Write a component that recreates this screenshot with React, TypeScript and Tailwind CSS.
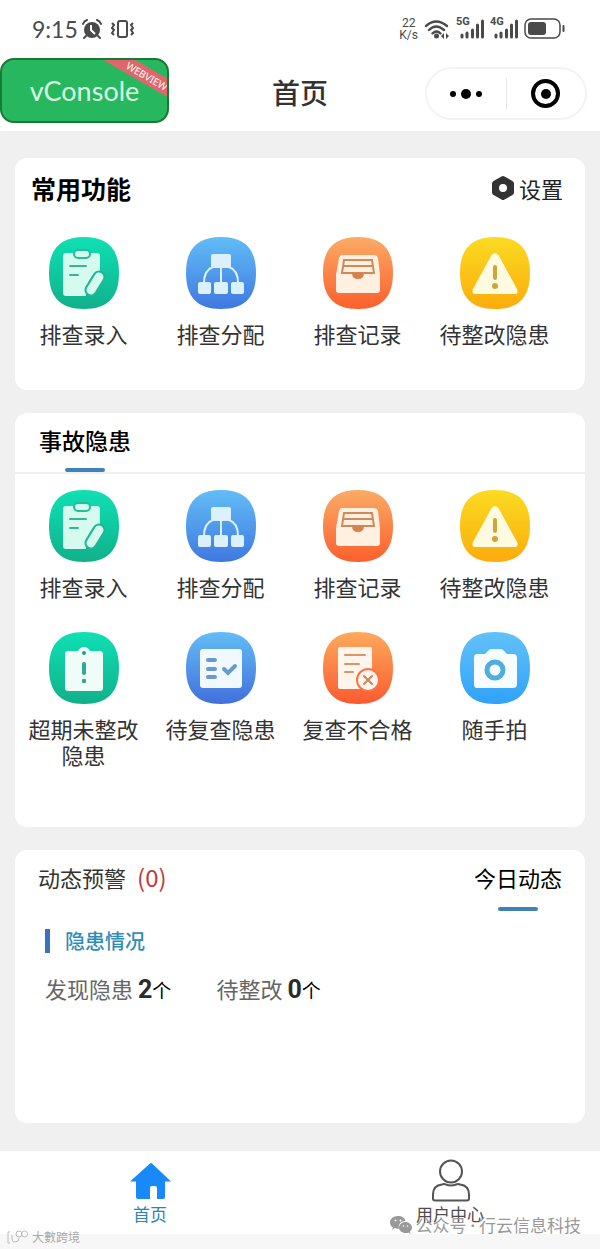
import React, { useState } from "react";

type IconName =
  | "entry"
  | "assign"
  | "record"
  | "warning"
  | "overdue"
  | "review"
  | "reject"
  | "camera";

interface MenuItem {
  icon: IconName;
  label: string;
}

const COMMON_MENUS: MenuItem[] = [
  { icon: "entry", label: "排查录入" },
  { icon: "assign", label: "排查分配" },
  { icon: "record", label: "排查记录" },
  { icon: "warning", label: "待整改隐患" },
];

const HAZARD_MENUS: MenuItem[] = [
  ...COMMON_MENUS,
  { icon: "overdue", label: "超期未整改隐患" },
  { icon: "review", label: "待复查隐患" },
  { icon: "reject", label: "复查不合格" },
  { icon: "camera", label: "随手拍" },
];

const ICON_COLORS: Record<IconName, [string, string]> = {
  entry: ["#0fe0b4", "#10b08a"],
  assign: ["#62bdf6", "#3f78e0"],
  record: ["#fbab66", "#fb5f2c"],
  warning: ["#fbdb22", "#fbac0c"],
  overdue: ["#0fe0b4", "#10b08a"],
  review: ["#62bdf6", "#426fdc"],
  reject: ["#fdaa5c", "#fb5a30"],
  camera: ["#62c2f8", "#30a2f8"],
};

const GLYPHS: Record<IconName, React.ReactNode> = {
  entry: (
    <>
      <path
        d="M18 16h31q3 0 3 3v15L38 56v3H18q-3 0-3-3V19q0-3 3-3Z"
        fill="#d5fbee"
      />
      <rect
        x="26"
        y="13"
        width="16"
        height="8"
        rx="4"
        fill="#d5fbee"
        stroke="#1fc09a"
        strokeWidth="2"
      />
      <path
        d="M22 29h16M22 38h8"
        stroke="#35b795"
        strokeWidth="2"
        strokeLinecap="round"
      />
      <path
        d="M51 40 43 53"
        stroke="#1cb893"
        strokeWidth="13"
        strokeLinecap="round"
      />
      <path
        d="M51 40 43 53"
        stroke="#d5fbee"
        strokeWidth="9"
        strokeLinecap="round"
      />
    </>
  ),
  assign: (
    <>
      <path
        d="M28 30q-9 3-9 16M36 30v17M44 30q9 3 9 16"
        fill="none"
        stroke="#dcf1ff"
        strokeWidth="2"
      />
      <rect x="26" y="17" width="20" height="14" rx="2" fill="#dcf1ff" />
      <rect x="13" y="45" width="13" height="12" rx="2" fill="#dcf1ff" />
      <rect x="29" y="45" width="14" height="12" rx="2" fill="#dcf1ff" />
      <rect x="46" y="45" width="13" height="12" rx="2" fill="#dcf1ff" />
    </>
  ),
  record: (
    <>
      <path
        d="M20 18h32q3 0 4 3l2 17v15q0 3-3 3H17q-3 0-3-3V38l3-17q1-3 3-3Z"
        fill="#fff0e2"
      />
      <path
        d="M22 23h28l2 13H20Z"
        fill="#fff0e2"
        stroke="#d08a58"
        strokeWidth="2"
      />
      <path d="M22 29h28" stroke="#d08a58" strokeWidth="2" />
      <path d="M30 36h12q0 6-6 6t-6-6Z" fill="#d9814e" />
    </>
  ),
  warning: (
    <>
      <path
        d="M32 19q4-6 8 0l18 33q2 5-3 5H17q-5 0-3-5Z"
        fill="#fffbe0"
      />
      <path
        d="M36 30v11"
        stroke="#cfa53a"
        strokeWidth="4"
        strokeLinecap="round"
      />
      <circle cx="36" cy="49" r="3" fill="#cfa53a" />
    </>
  ),
  overdue: (
    <>
      <path
        d="M20 19h10q2-4 6-4t6 4h10q3 0 3 3v34q0 3-3 3H20q-3 0-3-3V22q0-3 3-3Z"
        fill="#effcf8"
      />
      <circle cx="36" cy="21" r="2" fill="#2b9c84" />
      <path d="M36 32v9" stroke="#2cab8e" strokeWidth="4" strokeLinecap="round" />
      <rect x="34" y="47" width="4" height="4" rx="1" fill="#2cab8e" />
    </>
  ),
  review: (
    <>
      <rect x="15" y="17" width="42" height="39" rx="3" fill="#f1f8fe" />
      <path
        d="M23 28h7M23 37h7M23 45h7"
        stroke="#6a9bcd"
        strokeWidth="4"
        strokeLinecap="round"
      />
      <path
        d="m39 37 4 4 7-7"
        fill="none"
        stroke="#6a9bcd"
        strokeWidth="4"
        strokeLinecap="round"
      />
    </>
  ),
  reject: (
    <>
      <rect x="16" y="15" width="34" height="42" rx="2" fill="#fff5ec" />
      <path
        d="M23 23h20M23 32h14M23 40h8"
        stroke="#dc9465"
        strokeWidth="2"
        strokeLinecap="round"
      />
      <circle
        cx="46"
        cy="48"
        r="11"
        fill="#fff5ec"
        stroke="#fb7442"
        strokeWidth="2"
      />
      <path
        d="m42 44 8 8M50 44l-8 8"
        stroke="#c9875a"
        strokeWidth="2"
        strokeLinecap="round"
      />
    </>
  ),
  camera: (
    <>
      <path
        d="M18 22h8l4-4q1-1 3-1h8q2 0 3 1l4 4h6q4 0 4 4v26q0 4-4 4H18q-3 0-3-4V26q0-4 3-4Z"
        fill="#f7fdff"
      />
      <circle cx="36" cy="38" r="8" fill="none" stroke="#4faee0" strokeWidth="5" />
    </>
  ),
};

const MenuIcon = ({ name, id }: { name: IconName; id: string }) => {
  const [from, to] = ICON_COLORS[name];
  return (
    <svg viewBox="0 0 72 72" className="size-[72px]" aria-hidden="true">
      <defs>
        <linearGradient id={id} x1="0" y1="0" x2="0" y2="1">
          <stop offset="0" stopColor={from} />
          <stop offset="1" stopColor={to} />
        </linearGradient>
      </defs>
      <path
        d="M36 0C60 0 71 12 71 36S60 72 36 72 1 60 1 36 12 0 36 0Z"
        fill={`url(#${id})`}
      />
      {GLYPHS[name]}
    </svg>
  );
};

const MenuGrid = ({ items, prefix }: { items: MenuItem[]; prefix: string }) => (
  <div className="grid grid-cols-4 gap-y-[33px] pr-[22px]">
    {items.map((item) => (
      <button
        key={item.label}
        type="button"
        className="flex flex-col items-center gap-[11px] px-2 text-[22px] leading-[26px] text-[#333]"
      >
        <MenuIcon name={item.icon} id={`${prefix}-${item.icon}`} />
        <span>{item.label}</span>
      </button>
    ))}
  </div>
);

const Signal = ({ label }: { label: string }) => (
  <div className="relative h-5 w-7">
    <span className="absolute -top-1 left-0 font-[Roboto] text-[11px] leading-[14px] font-bold">
      {label}
    </span>
    <svg viewBox="0 0 28 20" className="h-5 w-7" aria-hidden="true">
      <path
        d="M6 16v2M11 14v4M16.500 11v7M21.500 6v12M26.500 2v16"
        stroke="currentColor"
        strokeWidth="3"
        strokeLinecap="round"
      />
    </svg>
  </div>
);

const StatusBar = () => (
  <div className="flex h-[58px] items-center justify-between pr-[34px] pl-8 text-[#4a4a4a]">
    <div className="flex items-center gap-1">
      <span className="font-[Lato] text-[23px] leading-8">9:15</span>
      <svg viewBox="0 0 20 20" className="size-5" aria-hidden="true">
        <circle cx="10" cy="11" r="8" fill="currentColor" />
        <path
          d="M1 5q1-3 4-4M19 5q-1-3-4-4M4 17l-2 2M16 17l2 2"
          fill="none"
          stroke="currentColor"
          strokeWidth="2"
          strokeLinecap="round"
        />
        <path d="M9 6v5l4 4" fill="none" stroke="#fff" strokeWidth="2" />
      </svg>
      <svg viewBox="0 0 26 20" className="ml-1 h-5 w-[26px]" aria-hidden="true">
        <rect
          x="8"
          y="2"
          width="9"
          height="16"
          rx="2"
          fill="none"
          stroke="currentColor"
          strokeWidth="2"
        />
        <path
          d="m2 4 2 2-2 3 2 2-2 3 2 2M23 4l-2 2 2 3-2 2 2 3-2 2"
          fill="none"
          stroke="currentColor"
          strokeWidth="2"
        />
      </svg>
    </div>
    <div className="flex items-center gap-[6px]">
      <div className="text-center font-[Roboto] text-[12px] leading-3">
        <div>22</div>
        <div>K/s</div>
      </div>
      <svg viewBox="0 0 26 20" className="h-5 w-[26px]" aria-hidden="true">
        <path
          d="M2 7q10-9 21 0M5 11q7-7 15 0M8.500 14.500q4-4 8 0"
          fill="none"
          stroke="currentColor"
          strokeWidth="2.400"
          strokeLinecap="round"
        />
        <circle cx="12.500" cy="17" r="2.500" fill="currentColor" />
        <path d="m20 14-3 3 3 3ZM22 14l3 3-3 3Z" fill="currentColor" />
      </svg>
      <Signal label="5G" />
      <Signal label="4G" />
      <svg viewBox="0 0 42 22" className="h-[22px] w-[42px]" aria-hidden="true">
        <rect
          x="1"
          y="1"
          width="35"
          height="19"
          rx="6"
          fill="none"
          stroke="currentColor"
          strokeWidth="1.500"
        />
        <rect x="4" y="4" width="18" height="13" rx="3" fill="currentColor" />
        <path
          d="M39.500 8v5"
          stroke="currentColor"
          strokeWidth="2"
          strokeLinecap="round"
        />
      </svg>
    </div>
  </div>
);

const NavBar = () => (
  <header className="grid h-[73px] grid-cols-[1fr_auto_1fr] items-start">
    <button
      type="button"
      className="relative h-[65px] w-[169px] overflow-hidden rounded-[14px] border-2 border-[#187a35] bg-[#27b85f] font-[Lato] text-[27px] leading-8 text-[#d9fbe3]"
    >
      vConsole
      <span className="absolute top-2 -right-7 w-24 rotate-[30deg] bg-[#e0666b] text-center font-['Noto_Sans'] text-[10px] leading-4 text-white">
        WEBVIEW
      </span>
    </button>
    <h1 className="pt-4 text-[28px] leading-9 font-medium text-[#333]">首页</h1>
    <div className="mt-[9px] mr-[13px] flex h-[53px] w-[162px] items-center justify-self-end rounded-full border-2 border-[#f3f3f3]">
      <button
        type="button"
        aria-label="更多"
        className="flex flex-1 items-center justify-center gap-[5px]"
      >
        <span className="size-[6px] rounded-full bg-black" />
        <span className="size-[10px] rounded-full bg-black" />
        <span className="size-[6px] rounded-full bg-black" />
      </button>
      <span className="h-8 w-px bg-[#e6e6e6]" />
      <button
        type="button"
        aria-label="关闭"
        className="flex flex-1 items-center justify-center"
      >
        <span className="flex size-[29px] items-center justify-center rounded-full border-4 border-black">
          <span className="size-[10px] rounded-full bg-black" />
        </span>
      </button>
    </div>
  </header>
);

const Stat = ({ label, value }: { label: string; value: number }) => (
  <p className="flex items-baseline text-[22px] leading-7 text-[#666]">
    {label}
    <strong className="ml-[5px] font-[Roboto] text-[25px] leading-7 font-bold text-[#2b2b2b]">
      {value}
    </strong>
    <span className="text-[19px] text-black">个</span>
  </p>
);

const WeChatMark = () => (
  <svg viewBox="0 0 22 18" className="h-[18px] w-[22px]" aria-hidden="true">
    <path
      d="M8 0C3 0 0 3 0 6.500c0 2 1 4 3 5L2 14l3-2q2 1 4 .500C8 8 11 5 15.500 5 15 2 12 0 8 0Z"
      fill="#999"
    />
    <path
      d="M15.500 6C12 6 9 8.500 9 11.500s3 5.500 6.500 5.500q2 0 3-.600l2 1.600-.500-2.500c1-1 2-2.500 2-4C22 8.500 19 6 15.500 6Z"
      fill="#999"
    />
    <g fill="#fff">
      <circle cx="5.500" cy="4.500" r="1" />
      <circle cx="10.500" cy="4.500" r="1" />
      <circle cx="13.500" cy="10" r=".8" />
      <circle cx="17.500" cy="10" r=".8" />
    </g>
  </svg>
);

const TabBar = () => {
  const [active, setActive] = useState("home");
  return (
    <nav className="relative mt-auto bg-[#f7f7f7] pb-[15px]">
      <div className="grid h-[83px] grid-cols-2 bg-white text-[17px] leading-6">
        <button
          type="button"
          onClick={() => setActive("home")}
          className={`flex flex-col items-center pt-2 ${
            active === "home" ? "text-[#2a86b8]" : "text-[#4d4d4d]"
          }`}
        >
          <svg viewBox="0 0 42 43" className="h-[43px] w-[42px]" aria-hidden="true">
            <path
              d="M21 4.500q1-1 2 0l19 18H36V38q0 2-2 2h-6V29q0-2-2-2h-3q-2 0-2 2v11H9q-2 0-2-2V22.500H1Z"
              fill="#1989fa"
            />
          </svg>
          首页
        </button>
        <button
          type="button"
          onClick={() => setActive("user")}
          className={`flex flex-col items-center pt-2 ${
            active === "user" ? "text-[#2a86b8]" : "text-[#4d4d4d]"
          }`}
        >
          <svg viewBox="0 0 42 43" className="h-[43px] w-[42px]" aria-hidden="true">
            <g fill="none" stroke="#555" strokeWidth="2">
              <circle cx="22" cy="12.500" r="11" />
              <path d="M13 25.500q2-1 4 0 5 2 10 0 2-1 4 0 9 1 9 10v4q0 2-2 2H6q-2 0-2-2v-4q0-9 9-10Z" />
            </g>
          </svg>
          用户中心
        </button>
      </div>
      <div className="absolute right-[19px] bottom-3 flex items-center gap-1 text-[17px] leading-6 text-[#999]">
        <WeChatMark />
        <span>公众号</span>
        <span className="font-[Lato]">·</span>
        <span>行云信息科技</span>
      </div>
      <div className="absolute bottom-1 left-[7px] flex items-center gap-1 text-[12px] leading-4 text-[#aaa]">
        <svg viewBox="0 0 21 14" className="h-[14px] w-[21px]" aria-hidden="true">
          <g fill="none" stroke="#bbb" strokeWidth="1">
            <path d="M3 2H1v11h2M5 5v4q0 3 3 3 4 0 4-4" />
            <circle cx="12" cy="4" r="3" />
            <circle cx="17.500" cy="4" r="3" />
          </g>
        </svg>
        大數跨境
      </div>
    </nav>
  );
};

export default function App() {
  return (
    <div className="flex min-h-screen flex-col bg-[#f0f0f0] font-['Noto_Sans_CJK_SC',sans-serif]">
      <div className="bg-white">
        <StatusBar />
        <NavBar />
      </div>

      <main className="flex flex-col gap-[23px] px-[15px] py-[27px]">
        <section className="rounded-xl bg-white pt-[14px] pb-[44px]">
          <div className="mb-[33px] flex items-center justify-between pr-[22px] pl-4">
            <h2 className="text-[25px] leading-8 font-bold text-black">
              常用功能
            </h2>
            <button
              type="button"
              className="flex items-center gap-1 text-[22px] leading-8 text-[#222]"
            >
              <svg viewBox="0 0 24 26" className="h-[26px] w-6" aria-hidden="true">
                <path
                  d="M10.500 1.500q1.500-1 3 0l8 4.500q1.500 1 1.500 2.500v9q0 1.500-1.500 2.500l-8 4.500q-1.500 1-3 0L2.500 20Q1 19 1 17.500v-9Q1 7 2.500 6Z"
                  fill="#333"
                />
                <circle cx="12" cy="13" r="4" fill="#fff" />
              </svg>
              设置
            </button>
          </div>
          <MenuGrid items={COMMON_MENUS} prefix="common" />
        </section>

        <section className="rounded-xl bg-white pb-[60px]">
          <div className="mb-4 flex h-[61px] border-b-2 border-[#f0f0f0] px-6">
            <div className="flex flex-col items-center justify-between pt-[14px]">
              <h2 className="text-[23px] leading-[26px] font-medium text-black">
                事故隐患
              </h2>
              <span className="h-1 w-10 rounded-full bg-[#3f82b8]" />
            </div>
          </div>
          <MenuGrid items={HAZARD_MENUS} prefix="hazard" />
        </section>

        <section className="min-h-[273px] rounded-xl bg-white">
          <div className="flex h-[61px] justify-between px-[23px] text-[22px] leading-[26px]">
            <h2 className="flex gap-[11px] pt-[14px] text-[#333]">
              动态预警
              <span className="text-[24px] text-[#c03a3a]">(0)</span>
            </h2>
            <button
              type="button"
              className="flex flex-col items-center justify-between pt-[14px] text-black"
            >
              今日动态
              <span className="h-1 w-10 rounded-full bg-[#3f82b8]" />
            </button>
          </div>
          <div className="px-[30px] pt-[18px]">
            <h3 className="flex items-center gap-[15px] text-[20px] leading-6 font-medium text-[#2e8db8]">
              <span className="h-6 w-[5px] bg-[#3b72c0]" />
              隐患情况
            </h3>
            <div className="mt-[21px] flex gap-[45px]">
              <Stat label="发现隐患" value={2} />
              <Stat label="待整改" value={0} />
            </div>
          </div>
        </section>
      </main>

      <TabBar />
    </div>
  );
}
